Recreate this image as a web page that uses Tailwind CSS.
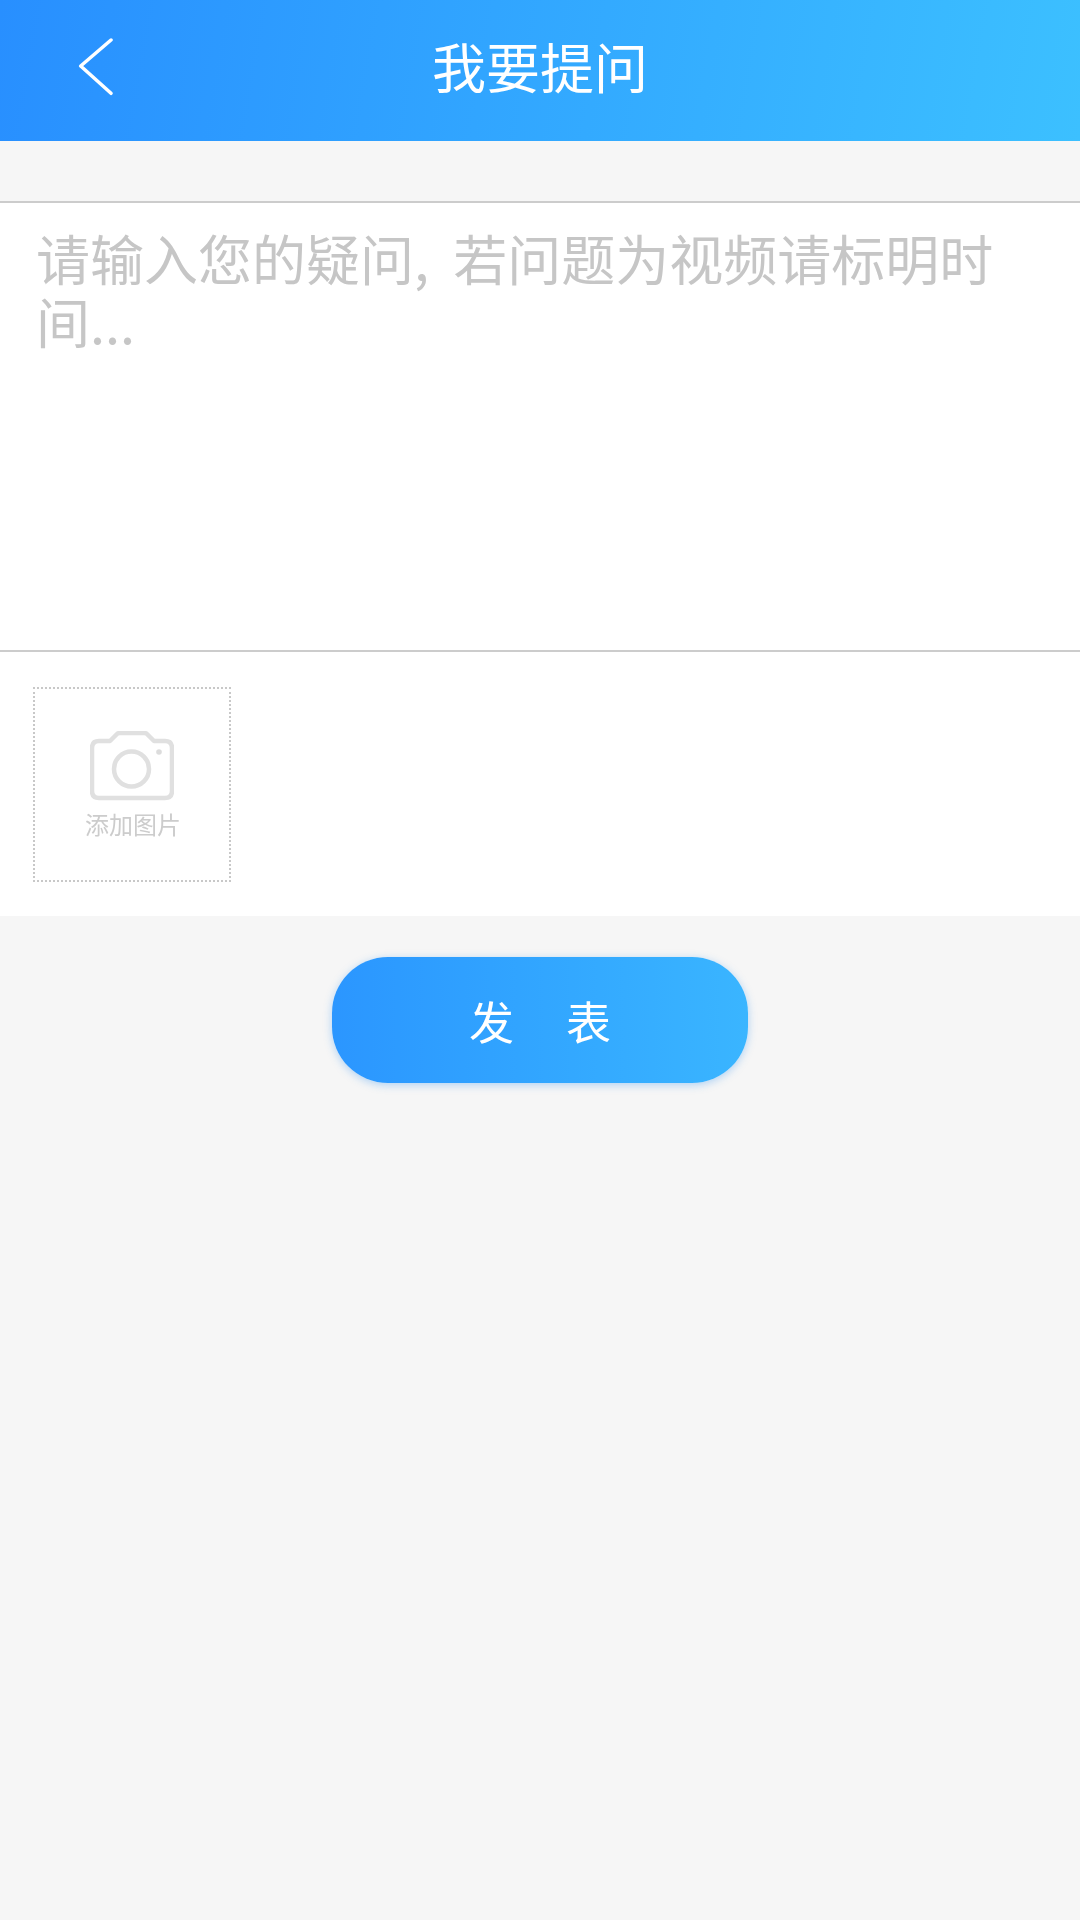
<!DOCTYPE html>
<html lang="zh-CN">
<head>
<meta charset="utf-8">
<script src="https://cdn.jsdelivr.net/npm/@tailwindcss/browser@4"></script>
</head>
<body class="m-0">
<div class="w-[1080px] h-[1920px] bg-[#f6f6f6] flex flex-col font-['Noto_Sans_CJK_SC',sans-serif] overflow-hidden">
  <header class="relative h-[141px] bg-linear-[100deg] from-[#288fff] to-[#3cc0ff] flex items-center justify-center text-white">
    <svg class="absolute left-[70px] top-[30px] w-[50px] h-[72px] blur-[0.5px]" viewBox="0 0 50 72" fill="none" stroke="white" stroke-width="3.5" stroke-linecap="round" stroke-linejoin="round"><path d="M41 10 L10.700 36 L41 63.300"/></svg>
    <h1 class="text-[54px] leading-none font-normal -mt-[9px] blur-[0.6px]">我要提问</h1>
  </header>
  <section class="mt-[60px] h-[451px] bg-white border-y-2 border-[#cccccc] pl-[36px] pr-[60px] pt-[23px]">
    <p class="text-[54px] leading-[63px] text-[#c6c6c6] font-normal blur-[0.6px]">请输入您的疑问,&nbsp;&nbsp;若问题为视频请标明时间...</p>
  </section>
  <section class="h-[264px] bg-white pl-[33px] pt-[35px]">
    <div class="w-[198px] h-[195px] border-2 border-dotted border-[#c8c8c8] flex flex-col items-center pt-[42px] blur-[0.5px]">
      <svg class="w-[84px] h-[70px]" viewBox="0 0 84 70" fill="none" stroke="#e0e0e0" stroke-width="4.500" stroke-linejoin="round"><path d="M9 10 H20 L27 3 Q28 2 30 2 H54 Q56 2 57 3 L64 10 H75 Q82 10 82 17 V60 Q82 67 75 67 H9 Q2 67 2 60 V17 Q2 10 9 10 Z"/><circle cx="41.500" cy="38" r="17.500"/><circle cx="69" cy="21" r="2.800" fill="#dcdcdc" stroke="none"/></svg>
      <span class="text-[24px] leading-[30px] text-[#cccccc] mt-[8px] ml-[2px]">添加图片</span>
    </div>
  </section>
  <button class="mt-[41px] self-center w-[416px] h-[126px] rounded-[56px] bg-linear-to-r from-[#2b96ff] to-[#3ab5ff] shadow-[0_2px_8px_rgba(40,140,240,0.35)] flex items-center justify-center gap-[52px] text-white text-[45px] leading-none">
    <span class="blur-[0.5px]">发</span><span class="blur-[0.5px]">表</span>
  </button>
</div>
</body>
</html>
